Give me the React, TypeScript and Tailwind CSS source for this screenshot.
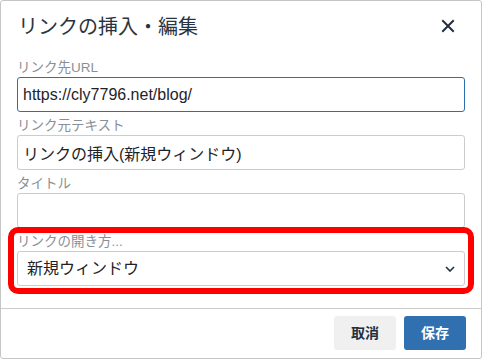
const FONT = { fontFamily: '"Liberation Sans", "Noto Sans CJK JP", sans-serif' };

function Field({ label, children }: { label: string; children: React.ReactNode }) {
  return (
    <div className="mt-[4px] flex flex-col">
      <label className="h-[19px] text-[13.5px] leading-[19px] text-[#8a8f96]">{label}</label>
      {children}
    </div>
  );
}

export default function App() {
  return (
    <div className="w-[482px] h-[359px] bg-white" style={FONT}>
      <div className="relative flex h-full flex-col rounded-[3px] border border-[#c5c5c5]">
        {/* Header */}
        <div className="flex h-[50px] items-center justify-between pl-[17px] pr-[21px]">
          <h1 className="text-[20px] leading-[24px] text-[#2a3440] mt-[2px]">リンクの挿入・編集</h1>
          <button className="flex h-[24px] w-[24px] items-center justify-center text-[#222f3e]">
            <svg width="14" height="14" viewBox="0 0 14 14" fill="none">
              <path d="M2 2L12 12M12 2L2 12" stroke="currentColor" strokeWidth="2" strokeLinecap="square" />
            </svg>
          </button>
        </div>

        {/* Body */}
        <div className="flex-1 px-[16px] pt-[3px]">
          <Field label="リンク先URL">
            <input
              readOnly
              value="https://cly7796.net/blog/"
              className="h-[35px] rounded-[3px] border border-[#2d6fb0] px-[5px] text-[16px] text-[#1f2328] outline-none"
            />
          </Field>
          <Field label="リンク元テキスト">
            <input
              readOnly
              value="リンクの挿入(新規ウィンドウ)"
              className="h-[35px] rounded-[3px] border border-[#cccccc] px-[5px] text-[16px] text-[#1f2328] outline-none"
            />
          </Field>
          <Field label="タイトル">
            <input
              readOnly
              value=""
              className="h-[35px] rounded-[3px] border border-[#cccccc] px-[5px] text-[16px] text-[#1f2328] outline-none"
            />
          </Field>
          <Field label="リンクの開き方...">
            <div className="flex h-[35px] items-center justify-between rounded-[3px] border border-[#cccccc] pl-[9px] pr-[8px] text-[16px] text-[#1f2328]">
              <span>新規ウィンドウ</span>
              <svg width="10" height="6" viewBox="0 0 10 6" fill="none" className="mr-[1px]">
                <path d="M1 1L5 5L9 1" stroke="#222f3e" strokeWidth="1.6" />
              </svg>
            </div>
          </Field>
        </div>

        {/* Annotation box */}
        <div className="pointer-events-none absolute left-[7px] top-[226px] h-[67px] w-[466px] rounded-[10px] border-[6px] border-[#ff0000]" />

        {/* Footer */}
        <div className="flex h-[50px] items-start justify-end gap-[8px] border-t border-[#cccccc] pr-[15px] pt-[7px]">
          <button className="h-[34px] w-[62px] rounded-[3px] bg-[#f0f0f0] text-[14px] font-bold text-[#222f3e]">
            取消
          </button>
          <button className="h-[34px] w-[62px] rounded-[3px] bg-[#3070b0] text-[14px] font-bold text-white">
            保存
          </button>
        </div>
      </div>
    </div>
  );
}
